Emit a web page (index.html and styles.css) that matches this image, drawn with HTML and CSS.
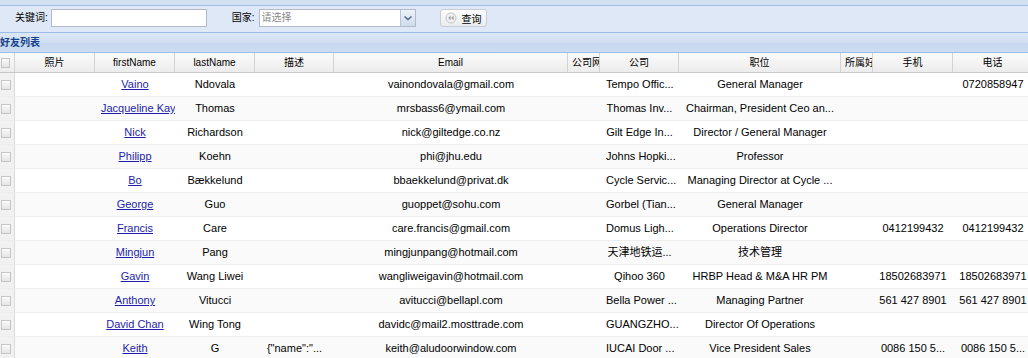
FILE: index.html
```html
<!DOCTYPE html>
<html lang="zh-CN">
<head>
<meta charset="utf-8">
<title>好友列表</title>
<link rel="stylesheet" href="styles.css">
</head>
<body>
<div class="top-strip"></div>
<div class="toolbar">
  <label class="lbl">关键词:</label>
  <input class="txt" type="text">
  <label class="lbl lbl-country">国家:</label>
  <div class="combo">
    <span class="combo-text">请选择</span>
    <span class="combo-btn"><svg width="14" height="16" viewBox="0 0 14 16"><path d="M3.5 6.5 L7 9.5 L10.5 6.5" fill="none" stroke="#4d6b93" stroke-width="1.6"/></svg></span>
  </div>
  <button class="btn" type="button"><svg width="12" height="12" viewBox="0 0 12 12"><circle cx="6" cy="6" r="5" fill="#f2f2f2" stroke="#c4c4c4"/><path d="M5.6 3.6 L3.2 6 L5.6 8.4Z M8.6 3.6 L6.2 6 L8.6 8.4Z" fill="#a0a0a0"/></svg><span>查询</span></button>
</div>
<div class="panel-title">好友列表</div>
<div class="grid">
  <div class="row head">
    <div class="c cb"><span class="cbx"></span></div>
    <div class="c">照片</div>
    <div class="c">firstName</div>
    <div class="c">lastName</div>
    <div class="c">描述</div>
    <div class="c">Email</div>
    <div class="c left">公司网</div>
    <div class="c">公司</div>
    <div class="c">职位</div>
    <div class="c left">所属好</div>
    <div class="c">手机</div>
    <div class="c">电话</div>
  </div>

  <div class="row">
    <div class="c cb"><span class="cbx"></span></div><div class="c"></div>
    <div class="c"><a href="#">Vaino</a></div><div class="c">Ndovala</div><div class="c"></div>
    <div class="c">vainondovala@gmail.com</div><div class="c"></div>
    <div class="c">Tempo Offic...</div><div class="c">General Manager</div><div class="c"></div>
    <div class="c"></div><div class="c">0720858947</div>
  </div>
  <div class="row alt">
    <div class="c cb"><span class="cbx"></span></div><div class="c"></div>
    <div class="c"><a href="#">Jacqueline Kaye</a></div><div class="c">Thomas</div><div class="c"></div>
    <div class="c">mrsbass6@ymail.com</div><div class="c"></div>
    <div class="c">Thomas Inv...</div><div class="c">Chairman, President Ceo an...</div><div class="c"></div>
    <div class="c"></div><div class="c"></div>
  </div>
  <div class="row">
    <div class="c cb"><span class="cbx"></span></div><div class="c"></div>
    <div class="c"><a href="#">Nick</a></div><div class="c">Richardson</div><div class="c"></div>
    <div class="c">nick@giltedge.co.nz</div><div class="c"></div>
    <div class="c">Gilt Edge In...</div><div class="c">Director / General Manager</div><div class="c"></div>
    <div class="c"></div><div class="c"></div>
  </div>
  <div class="row alt">
    <div class="c cb"><span class="cbx"></span></div><div class="c"></div>
    <div class="c"><a href="#">Philipp</a></div><div class="c">Koehn</div><div class="c"></div>
    <div class="c">phi@jhu.edu</div><div class="c"></div>
    <div class="c">Johns Hopki...</div><div class="c">Professor</div><div class="c"></div>
    <div class="c"></div><div class="c"></div>
  </div>
  <div class="row">
    <div class="c cb"><span class="cbx"></span></div><div class="c"></div>
    <div class="c"><a href="#">Bo</a></div><div class="c">Bækkelund</div><div class="c"></div>
    <div class="c">bbaekkelund@privat.dk</div><div class="c"></div>
    <div class="c">Cycle Servic...</div><div class="c">Managing Director at Cycle ...</div><div class="c"></div>
    <div class="c"></div><div class="c"></div>
  </div>
  <div class="row alt">
    <div class="c cb"><span class="cbx"></span></div><div class="c"></div>
    <div class="c"><a href="#">George</a></div><div class="c">Guo</div><div class="c"></div>
    <div class="c">guoppet@sohu.com</div><div class="c"></div>
    <div class="c">Gorbel (Tian...</div><div class="c">General Manager</div><div class="c"></div>
    <div class="c"></div><div class="c"></div>
  </div>
  <div class="row">
    <div class="c cb"><span class="cbx"></span></div><div class="c"></div>
    <div class="c"><a href="#">Francis</a></div><div class="c">Care</div><div class="c"></div>
    <div class="c">care.francis@gmail.com</div><div class="c"></div>
    <div class="c">Domus Ligh...</div><div class="c">Operations Director</div><div class="c"></div>
    <div class="c">0412199432</div><div class="c">0412199432</div>
  </div>
  <div class="row alt">
    <div class="c cb"><span class="cbx"></span></div><div class="c"></div>
    <div class="c"><a href="#">Mingjun</a></div><div class="c">Pang</div><div class="c"></div>
    <div class="c">mingjunpang@hotmail.com</div><div class="c"></div>
    <div class="c">天津地铁运...</div><div class="c">技术管理</div><div class="c"></div>
    <div class="c"></div><div class="c"></div>
  </div>
  <div class="row">
    <div class="c cb"><span class="cbx"></span></div><div class="c"></div>
    <div class="c"><a href="#">Gavin</a></div><div class="c">Wang Liwei</div><div class="c"></div>
    <div class="c">wangliweigavin@hotmail.com</div><div class="c"></div>
    <div class="c">Qihoo 360</div><div class="c">HRBP Head &amp; M&amp;A HR PM</div><div class="c"></div>
    <div class="c">18502683971</div><div class="c">18502683971</div>
  </div>
  <div class="row alt">
    <div class="c cb"><span class="cbx"></span></div><div class="c"></div>
    <div class="c"><a href="#">Anthony</a></div><div class="c">Vitucci</div><div class="c"></div>
    <div class="c">avitucci@bellapl.com</div><div class="c"></div>
    <div class="c">Bella Power ...</div><div class="c">Managing Partner</div><div class="c"></div>
    <div class="c">561 427 8901</div><div class="c">561 427 8901</div>
  </div>
  <div class="row">
    <div class="c cb"><span class="cbx"></span></div><div class="c"></div>
    <div class="c"><a href="#">David Chan</a></div><div class="c">Wing Tong</div><div class="c"></div>
    <div class="c">davidc@mail2.mosttrade.com</div><div class="c"></div>
    <div class="c">GUANGZHO...</div><div class="c">Director Of Operations</div><div class="c"></div>
    <div class="c"></div><div class="c"></div>
  </div>
  <div class="row alt">
    <div class="c cb"><span class="cbx"></span></div><div class="c"></div>
    <div class="c"><a href="#">Keith</a></div><div class="c">G</div><div class="c">{"name":"...</div>
    <div class="c">keith@aludoorwindow.com</div><div class="c"></div>
    <div class="c">IUCAI Door ...</div><div class="c">Vice President Sales</div><div class="c"></div>
    <div class="c">0086 150 5...</div><div class="c">0086 150 5...</div>
  </div>
</div>
</body>
</html>
```

FILE: styles.css
```css
html, body {
  margin: 0;
  padding: 0;
  overflow: hidden;
  background: #ffffff;
}
body {
  font-family: "Liberation Sans", "Noto Sans CJK SC", sans-serif;
  font-size: 11px;
  color: #000;
  width: 1028px;
  height: 358px;
}

.top-strip {
  height: 5px;
  background: #d4e1f2;
  border-bottom: 1px solid #a3bde0;
}

.toolbar {
  height: 27px;
  box-sizing: border-box;
  padding: 3px 0 0 15px;
  background: #dfe8f6;
  border-bottom: 1px solid #99bbe8;
  display: flex;
  align-items: flex-start;
}
.lbl {
  font-size: 10px;
  line-height: 18px;
  height: 18px;
  margin-right: 3px;
  color: #000;
}
.lbl-country {
  margin-left: 25px;
  margin-right: 4px;
}
.txt {
  width: 156px;
  height: 18px;
  box-sizing: border-box;
  border: 1px solid #b5b8c8;
  background: #fff;
  margin: 0;
  padding: 0 3px;
}
.combo {
  width: 157px;
  height: 18px;
  box-sizing: border-box;
  border: 1px solid #b5b8c8;
  background: #fff;
  display: flex;
  justify-content: space-between;
}
.combo-text {
  font-size: 10px;
  line-height: 16px;
  color: #8a8a8a;
  padding-left: 2px;
}
.combo-btn {
  width: 14px;
  height: 16px;
  background: linear-gradient(#eef3fa, #cfdcec);
  border-left: 1px solid #b5c6dc;
  display: flex;
}
.btn {
  margin-left: 24px;
  width: 47px;
  height: 18px;
  box-sizing: border-box;
  padding: 0 0 0 4px;
  border: 1px solid #c9cdd3;
  border-radius: 3px;
  background: linear-gradient(#fdfdfd, #e9ecf0);
  display: flex;
  align-items: center;
  gap: 5px;
  font-family: "Noto Sans CJK SC", sans-serif;
  font-size: 10px;
  color: #000;
}

.panel-title {
  height: 19px;
  line-height: 19px;
  font-size: 10px;
  font-weight: bold;
  color: #15428b;
  background: linear-gradient(#dde8f6, #d1def1 50%, #c6d7ee 51%, #cddcf0);
  border-bottom: 1px solid #99bbe8;
  padding-left: 0;
}

.grid {
  width: 1033px;
}
.row {
  display: grid;
  grid-template-columns: 15px 80px 80px 80px 79px 234px 32px 79px 162px 32px 80px 80px;
  height: 24px;
  box-sizing: border-box;
  border-bottom: 1px solid #ededed;
  background: #fff;
}
.row.alt {
  background: #fafafa;
}
.c {
  overflow: hidden;
  white-space: nowrap;
  text-align: center;
  line-height: 23px;
  padding: 0 6px;
  box-sizing: border-box;
}
.c.cb {
  padding: 0;
  background: #f1f1f1;
  border-right: 1px solid #dcdcdc;
  display: flex;
  align-items: center;
  justify-content: flex-start;
  padding-left: 1px;
}
.cbx {
  width: 10px;
  height: 10px;
  box-sizing: border-box;
  border: 1px solid #c6c6c6;
  background: linear-gradient(#fbfbfb, #e4e4e4);
}
.c a {
  color: #1e1ea8;
  text-decoration: underline;
}

.row.head {
  height: 20px;
  border-bottom: 1px solid #c9c9c9;
  background: linear-gradient(#fbfbfb, #ececec);
  font-size: 10px;
}
.row.head .c {
  line-height: 19px;
  padding: 0 4px;
  border-right: 1px solid #d3d3d3;
}
.row.head .c.left {
  text-align: left;
}
.row.head .c.cb {
  background: transparent;
  padding-left: 1px;
}
```
